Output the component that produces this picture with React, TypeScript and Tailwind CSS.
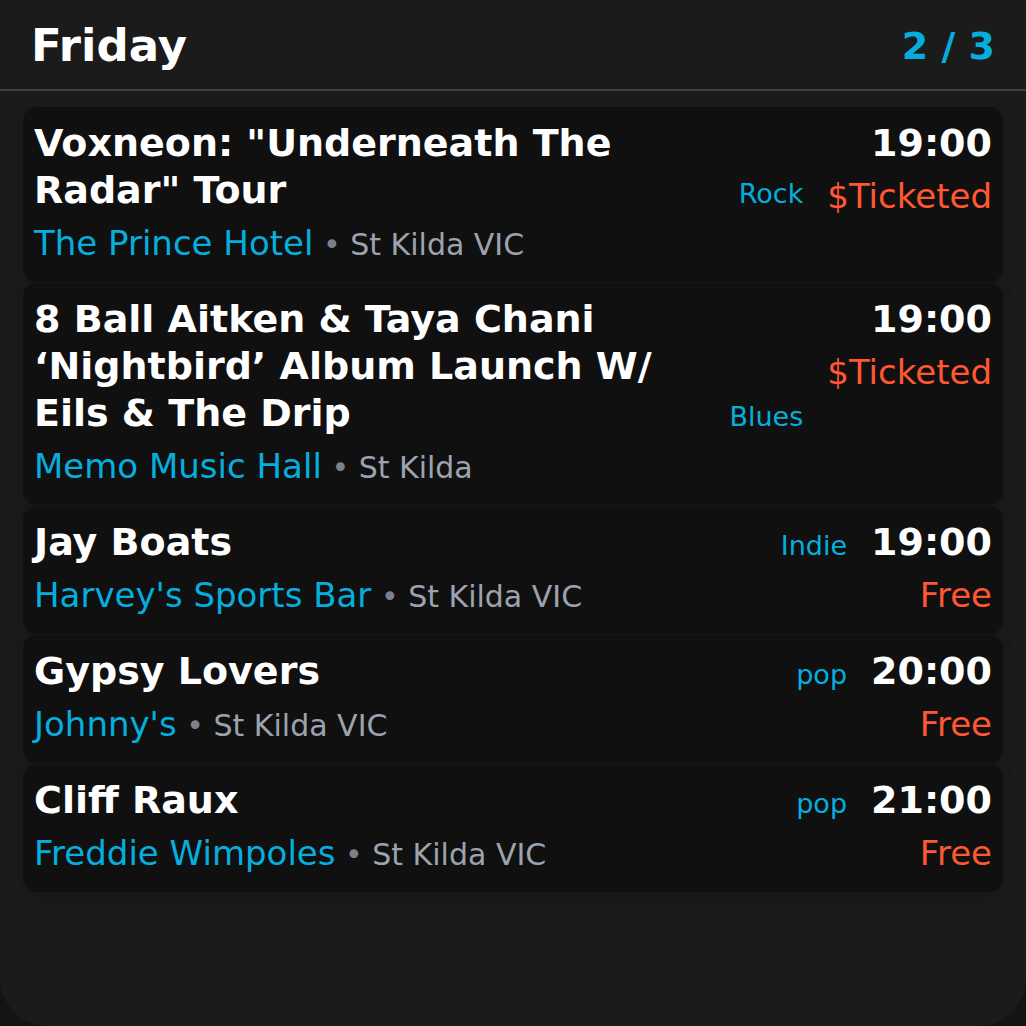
import React from "react";

type Event = {
  title: string;
  venue: string;
  location: string;
  genre: string;
  time: string;
  price: string;
};

const events: Event[] = [
  {
    title: 'Voxneon: "Underneath The Radar" Tour',
    venue: "The Prince Hotel",
    location: "St Kilda VIC",
    genre: "Rock",
    time: "19:00",
    price: "$Ticketed",
  },
  {
    title: "8 Ball Aitken & Taya Chani \u2018Nightbird\u2019 Album Launch W/ Eils & The Drip",
    venue: "Memo Music Hall",
    location: "St Kilda",
    genre: "Blues",
    time: "19:00",
    price: "$Ticketed",
  },
  {
    title: "Jay Boats",
    venue: "Harvey's Sports Bar",
    location: "St Kilda VIC",
    genre: "Indie",
    time: "19:00",
    price: "Free",
  },
  {
    title: "Gypsy Lovers",
    venue: "Johnny's",
    location: "St Kilda VIC",
    genre: "pop",
    time: "20:00",
    price: "Free",
  },
  {
    title: "Cliff Raux",
    venue: "Freddie Wimpoles",
    location: "St Kilda VIC",
    genre: "pop",
    time: "21:00",
    price: "Free",
  },
];

function EventCard({ e }: { e: Event }) {
  return (
    <div className="flex gap-[24px] rounded-[14px] bg-[#101010] pl-[11px] pr-[11px] pt-[13px] pb-[18px] shadow-[0_8px_16px_rgba(0,0,0,0.12)]">
      <div className="flex min-w-0 flex-1 flex-col">
        <div className="flex gap-[16px] [align-items:last_baseline]">
          <div className="min-w-0 flex-1 text-[38px] font-bold leading-[47px] text-white">
            {e.title}
          </div>
          <div className="shrink-0 text-[27px] leading-[34px] text-[#06aede]">{e.genre}</div>
        </div>
        <div className="mt-[9px] text-[34px] leading-[41px]">
          <span className="text-[#06aede]">{e.venue}</span>
          <span className="text-[30px] leading-[34px] text-[#9ca3af]">
            {" "}
            <span className="text-[#7b818b]">•</span> {e.location}
          </span>
        </div>
      </div>
      <div className="flex shrink-0 flex-col items-end">
        <div className="text-[38px] font-bold leading-[47px] text-white">{e.time}</div>
        <div className="mt-[9px] text-[34px] leading-[41px] text-[#ff5733]">{e.price}</div>
      </div>
    </div>
  );
}

export default function App() {
  return (
    <div
      className="h-[1026px] w-full overflow-hidden bg-[#141414]"
      style={{ fontFamily: '"DejaVu Sans", "Noto Sans", sans-serif' }}
    >
      <div className="flex h-[1026px] flex-col rounded-b-[48px] bg-[#1b1b1b]">
        <div className="flex h-[89px] items-center justify-between px-[31px] pt-[2px]">
          <div className="text-[45px] font-bold leading-[54px] text-white">Friday</div>
          <div className="text-[38px] font-bold leading-[46px] text-[#06aede]">2 / 3</div>
        </div>
        <div className="h-[2px] bg-[#3a3f48]" />
        <div className="flex flex-col gap-px px-[23px] pt-[16px]">
          {events.map((e, i) => (
            <EventCard key={i} e={e} />
          ))}
        </div>
      </div>
    </div>
  );
}
